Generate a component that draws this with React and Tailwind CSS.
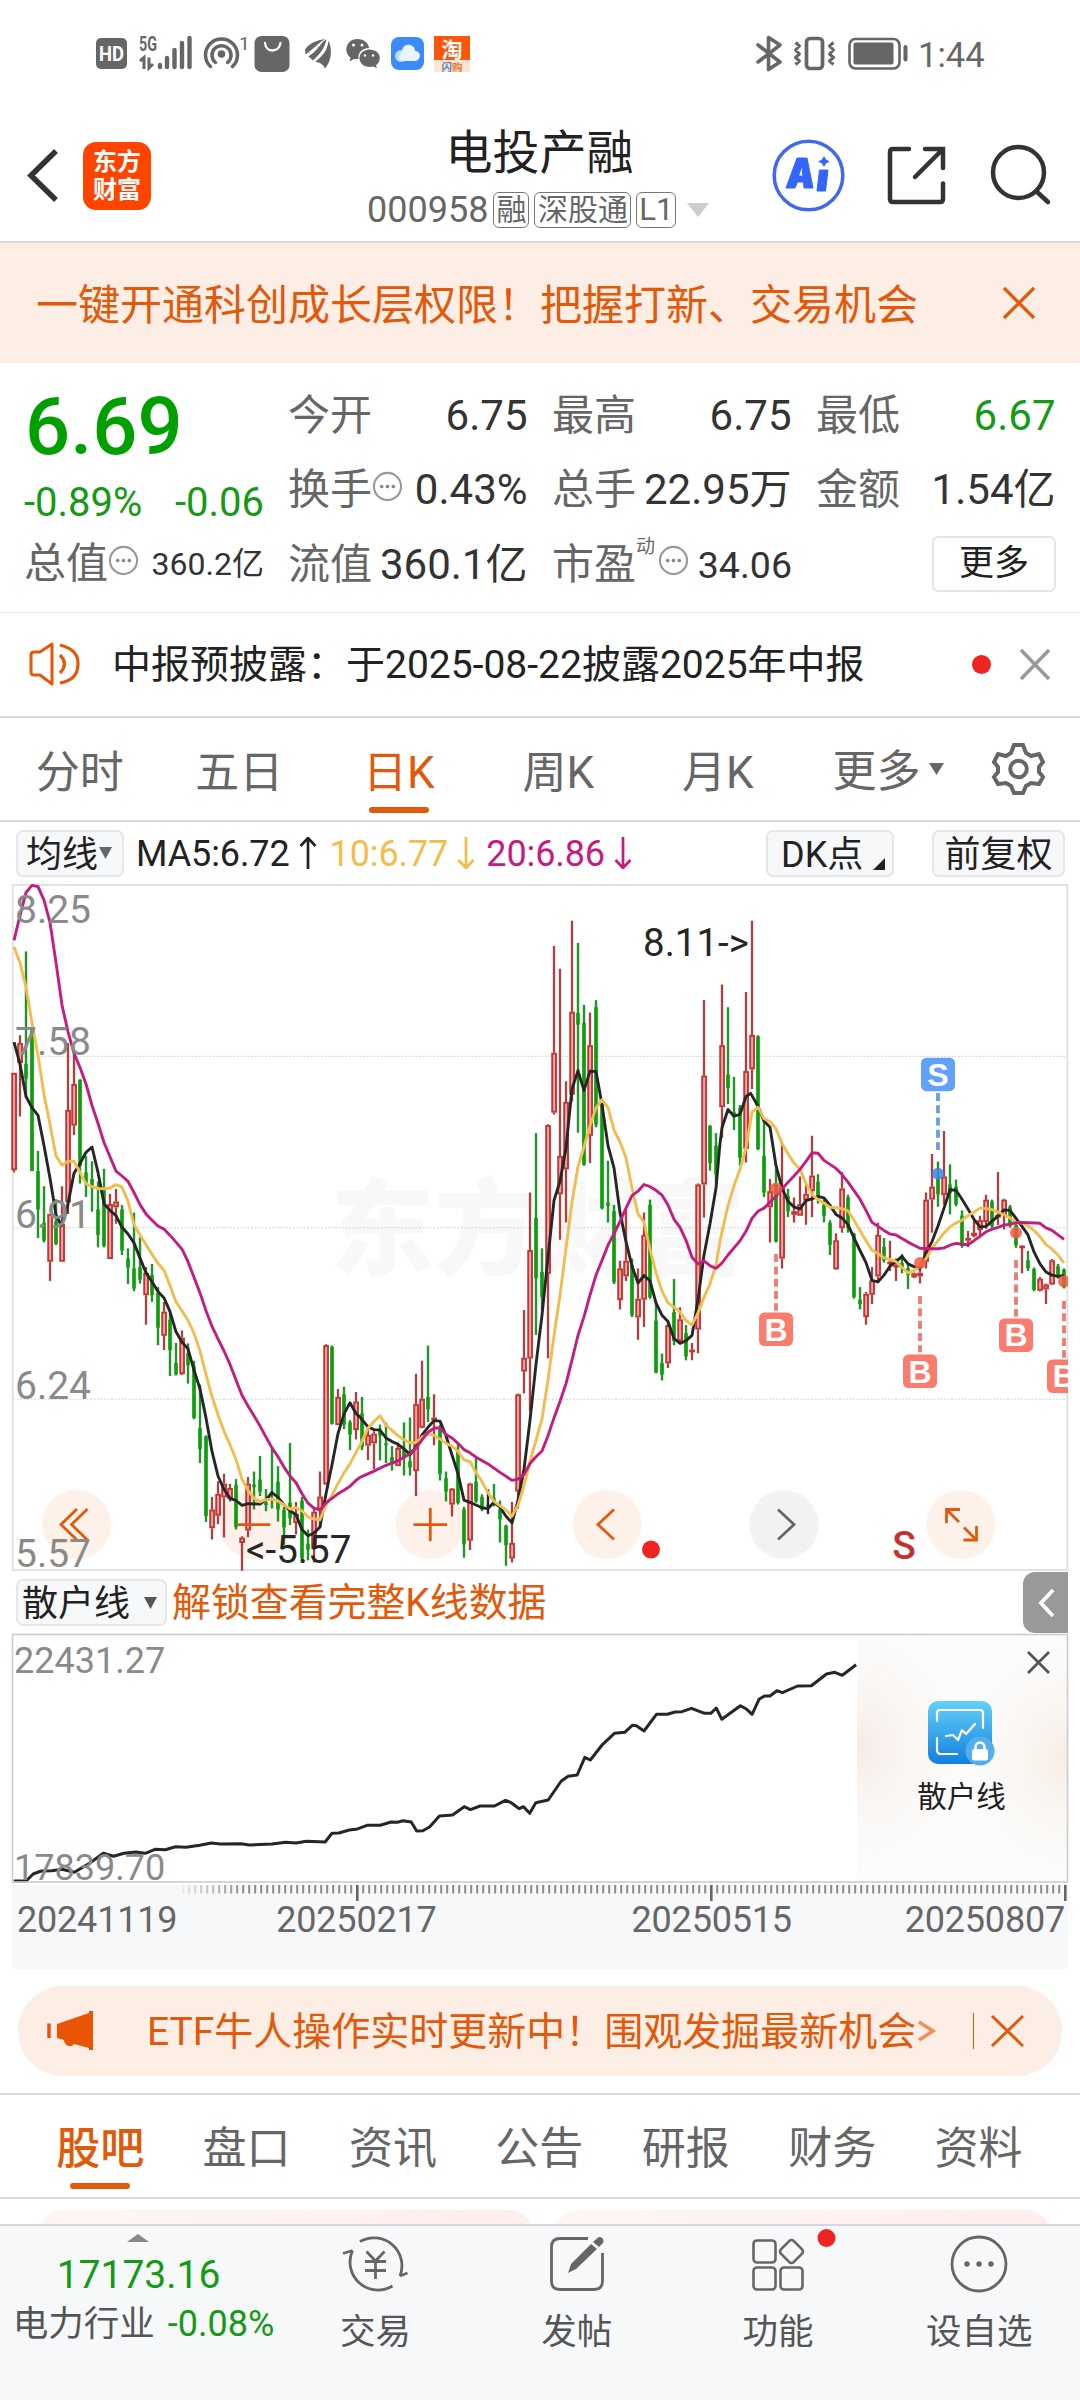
import React from "react";

/* Candles: high, body top, body bottom, low, direction (r up, g down, k flat). One slot every 6px. */
const CANDLES = `432,432,650,655,r;348,365,410,530,r;160,412,445,488,g;330,335,652,652,g;607,652,738,802,g;686,768,808,812,g;748,748,855,898,r;715,765,815,818,g;686,770,855,855,r;365,515,722,748,r;385,457,550,571,r;447,447,640,680,g;618,655,682,710,g;630,670,690,743,g;675,738,795,823,g;647,690,820,823,g;703,726,849,849,r;692,720,733,770,r;728,738,830,840,g;825,848,868,905,g;745,870,915,921,g;800,868,895,904,g;867,880,930,996,r;860,885,930,945,g;912,925,1003,1042,g;945,967,1021,1053,r;970,985,1053,1111,g;1037,1082,1108,1110,g;1009,1025,1107,1109,r;1038,1060,1087,1128,g;1077,1090,1205,1208,g;1130,1228,1275,1306,g;1244,1246,1425,1438,g;1382,1410,1452,1477,r;1347,1375,1424,1443,r;1330,1352,1383,1473,r;1353,1362,1387,1392,r;1342,1355,1450,1455,g;1470,1473,1485,1547,r;1337,1352,1457,1472,r;1325,1354,1360,1410,g;1290,1343,1370,1380,g;1364,1395,1400,1414,g;1273,1373,1378,1408,g;1313,1348,1410,1437,g;1405,1411,1450,1490,g;1261,1395,1430,1445,g;1393,1420,1440,1466,r;1382,1390,1520,1524,g;1455,1487,1500,1524,g;1408,1415,1498,1529,r;1325,1381,1410,1450,r;1040,1042,1354,1355,r;1043,1045,1218,1220,g;1140,1158,1221,1221,r;1135,1152,1220,1230,g;1210,1215,1242,1277,g;1147,1168,1232,1253,r;1158,1195,1270,1277,g;1225,1243,1267,1299,r;1235,1240,1262,1320,r;1220,1235,1245,1300,g;1215,1262,1266,1306,g;1268,1293,1308,1323,g;1260,1272,1313,1313,r;1215,1276,1295,1334,g;1204,1302,1316,1334,g;1106,1174,1324,1380,r;1077,1162,1227,1228,r;1043,1158,1185,1214,g;1152,1204,1210,1266,r;1220,1230,1330,1345,g;1325,1340,1370,1392,g;1362,1363,1399,1426,r;1262,1280,1395,1399,g;1404,1410,1488,1518,g;1350,1352,1480,1501,r;1294,1348,1392,1395,g;1376,1382,1410,1414,g;1365,1400,1402,1420,k;1353,1385,1390,1403,g;1390,1410,1432,1484,g;1444,1446,1490,1536,g;1393,1485,1520,1529,r;1150,1152,1370,1408,r;963,1070,1101,1150,r;700,829,1072,1190,r;567,757,892,1019,g;825,878,934,965,g;547,549,882,1071,r;148,387,521,525,r;199,618,704,806,r;451,497,648,767,r;91,295,481,496,r;141,298,324,566,g;280,320,638,640,g;297,370,573,634,r;269,285,548,554,g;490,495,735,738,g;629,723,730,767,g;728,742,901,905,g;853,870,941,962,r;737,853,888,898,r;848,862,975,979,g;870,938,980,1030,r;745,795,940,1001,r;716,728,935,938,g;945,987,1103,1105,g;1061,1082,1108,1121,g;988,997,1083,1093,r;894,968,1033,1042,g;957,984,1033,1037,r;997,1015,1067,1076,g;1037,1052,1056,1076,r;680,682,1007,1060,r;269,438,682,756,r;549,551,634,651,g;567,595,660,680,g;234,370,509,578,r;285,436,466,502,g;441,520,530,560,g;504,510,622,640,g;251,428,602,633,r;91,347,424,468,r;348,350,603,605,g;540,618,700,710,g;670,697,733,812,r;647,682,810,812,g;588,690,848,870,r;692,708,742,755,g;711,742,750,767,r;664,726,752,752,r;682,703,718,772,r;573,662,697,755,r;659,676,710,725,g;713,727,752,767,g;762,768,817,840,g;791,807,872,873,r;654,691,780,790,r;705,711,780,790,g;790,793,934,938,g;912,940,950,962,g;923,927,979,996,r;867,897,929,950,r;768,795,888,903,r;802,822,852,857,g;808,855,860,876,r;848,862,866,898,r;838,858,868,881,g;857,870,885,916,g;879,881,890,892,r;862,880,888,904,r;700,716,855,870,r;614,687,716,790,r;631,666,704,732,g;562,664,706,727,r;637,682,702,749,g;671,687,727,731,g;740,752,820,824,g;786,802,808,822,r;762,790,798,801,r;752,762,784,800,r;705,716,766,781,r;716,720,776,779,g;654,750,755,773,r;714,716,751,783,r;728,732,775,779,g;770,773,818,824,g;818,819,824,881,r;831,852,870,876,g;868,872,918,921,g;889,893,920,922,r;904,906,917,950,r;849,852,906,908,r;860,865,890,893,g;870,873,912,915,g`
  .split(";")
  .map((s) => s.split(","));

/* Moving averages, three consecutive panels of 360px each. */
const MA5 = [
  "42,363 60,412 78,485 96,510 114,527 132,595 150,668 168,750 184,774 200,740 222,657 240,635 258,610 276,598 294,655 312,725 330,740 348,752 366,778 384,793 402,813 420,847 438,880 456,900 474,922 492,936 510,967 528,1012 546,1035 564,1050 582,1098 600,1140 618,1205 636,1280 654,1335 672,1365 690,1385 708,1390 726,1401 744,1397 780,1398 800,1387 816,1372 834,1383 852,1400 870,1413 888,1422 906,1455 924,1469 942,1463 960,1449 978,1375 996,1310 1014,1240 1032,1196 1050,1171 1068,1195",
  "0,1203 24,1225 42,1231 60,1232 78,1250 96,1258 114,1264 132,1274 150,1287 168,1270 186,1243 204,1226 222,1211 240,1212 258,1245 276,1288 294,1330 312,1389 330,1394 348,1400 366,1406 384,1408 402,1394 420,1405 438,1425 456,1440 474,1390 492,1320 510,1210 528,1085 546,975 564,845 582,718 600,675 618,600 636,468 654,427 672,472 690,428 708,429 726,503 744,595 762,645 780,745 798,810 816,865 834,903 852,886 870,898 888,947 906,975 924,989 942,1027 960,1038 978,1032 996,1020 1014,940 1032,840 1050,770 1068,690 1080,590",
  "6,555 24,514 42,529 60,525 78,485 92,478 114,507 132,540 150,554 168,640 186,690 204,720 222,732 240,737 258,718 276,714 294,709 312,712 330,729 348,749 366,757 384,772 402,802 420,830 438,857 456,897 474,900 492,885 510,865 528,855 546,843 564,860 582,866 600,870 618,835 636,810 654,775 672,735 690,694 708,695 726,715 744,737 762,760 780,777 798,776 816,764 834,753 852,739 870,740 888,758 906,776 924,795 942,833 960,860 978,878 996,885 1014,888 1032,886",
];
const MA10 = [
  "42,150 60,185 78,240 96,320 114,393 132,480 150,548 168,618 186,639 204,630 222,630 240,655 258,680 276,687 294,691 312,692 330,690 348,682 366,688 384,720 402,772 420,795 438,817 456,838 474,859 492,874 510,908 528,945 546,965 564,987 582,1015 600,1055 618,1108 636,1157 654,1198 672,1235 690,1265 708,1298 726,1342 744,1367 762,1385 780,1393 798,1388 816,1387 834,1391 852,1400 870,1409 888,1406 906,1413 924,1427 942,1431 960,1433 978,1400 996,1378 1014,1352 1032,1328 1050,1308 1068,1282",
  "0,1267 24,1228 42,1213 60,1200 78,1221 96,1233 114,1245 132,1254 150,1260 168,1260 186,1248 204,1241 222,1244 240,1252 258,1262 276,1268 294,1280 312,1299 330,1303 348,1327 366,1348 384,1373 402,1392 420,1402 438,1411 456,1425 474,1400 492,1357 510,1302 528,1255 546,1207 564,1120 582,1020 600,930 618,825 636,722 654,642 672,598 690,550 708,511 726,492 744,510 762,560 780,587 798,622 816,690 834,748 852,767 870,827 888,880 906,921 924,947 942,957 960,968 978,987 996,997 1014,970 1032,935 1050,905 1068,862",
  "0,810 6,788 24,730 42,685 60,648 78,600 96,520 114,509 132,535 150,541 168,557 186,590 204,613 222,634 240,648 258,680 276,705 294,716 312,724 330,733 348,734 366,736 384,741 402,762 420,785 438,808 456,829 474,837 492,846 510,850 528,855 546,868 564,880 582,875 600,864 618,848 636,825 654,808 672,791 690,777 708,768 726,762 744,752 762,744 780,735 798,736 816,738 834,744 852,750 870,757 888,768 906,768 924,775 942,785 960,799 978,817 996,827 1014,840 1032,858",
];
const MA20 = [
  "42,135 60,80 78,28 96,12 114,15 132,45 150,95 168,185 186,280 204,340 222,388 240,420 258,457 276,505 294,545 312,588 330,620 348,652 366,663 384,675 402,700 420,727 438,748 456,762 474,775 492,782 510,796 528,811 546,827 564,855 582,890 600,925 618,965 636,1000 654,1028 672,1055 690,1085 708,1120 726,1154 744,1178 762,1200 780,1223 798,1248 816,1272 834,1292 852,1315 870,1335 888,1350 906,1375 924,1396 942,1407 960,1411 978,1395 996,1385 1014,1375 1032,1367 1050,1358 1068,1345",
  "0,1338 42,1324 78,1311 114,1301 150,1285 168,1272 186,1254 204,1237 222,1228 240,1227 258,1242 276,1250 294,1262 312,1276 330,1283 348,1293 384,1308 420,1327 456,1345 474,1342 492,1332 510,1307 528,1292 546,1279 564,1245 582,1205 600,1168 618,1128 636,1075 654,1020 672,978 690,930 708,885 726,852 744,818 762,792 780,765 798,735 816,707 834,697 852,682 870,687 888,695 906,706 924,728 942,760 960,778 978,807 996,845 1014,860 1032,853 1050,864 1068,870 1080,862",
  "6,858 24,840 42,824 60,808 78,787 96,758 114,742 132,735 150,722 168,708 186,692 204,677 222,663 240,648 258,630 276,611 294,612 312,628 330,637 348,646 366,660 384,677 402,696 420,715 438,740 456,767 474,776 492,785 510,793 528,795 546,803 564,811 582,818 600,825 636,826 654,826 672,824 690,818 708,814 726,816 744,817 762,808 780,798 798,788 816,782 834,778 852,773 870,771 888,768 906,767 960,769 978,779 996,785 1014,795 1032,805",
];
const RETAIL =
  "20,963 38,963 48,942 60,933 75,932 90,928 108,937 120,922 130,910 150,880 165,889 180,880 197,876 211,880 225,868 240,869 255,860 270,862 290,856 307,849 320,852 350,851 362,855 395,852 415,847 430,849 445,844 472,846 482,820 492,819 507,810 517,808 533,796 552,796 568,786 577,787 585,782 597,786 605,813 614,812 624,800 638,768 657,765 674,740 683,749 697,738 718,738 734,721 742,728 754,746 760,740 769,760 778,728 796,720 815,663 825,649 838,645 849,592 857,600 875,553 892,520 907,517 918,496 924,497 935,513 953,463 969,463 980,456 990,455 1004,445 1023,460 1032,460 1040,444 1048,478 1058,463 1075,437 1083,446 1092,463 1102,418 1110,408 1118,408 1128,392 1136,398 1158,378 1178,377 1200,342 1212,337 1223,346 1243,314";

const py = (v) => 880 + v / 2.24;
const linePoints = (parts) =>
  parts
    .flatMap((p, k) =>
      p.split(" ").map((s) => {
        const [x, y] = s.split(",").map(Number);
        return `${(k * 360 + x / 3).toFixed(1)},${py(y).toFixed(1)}`;
      })
    )
    .join(" ");
const retailPoints = RETAIL.split(" ")
  .map((s) => {
    const [x, y] = s.split(",").map(Number);
    return `${(x / 1.4519).toFixed(1)},${(1560 + y / 3).toFixed(1)}`;
  })
  .join(" ");

/* Icon whose drawing uses page units: box = "x y w h" */
function Icon({ box, className = "", children }) {
  const [, , w, h] = box.split(" ");
  return (
    <svg viewBox={box} width={w} height={h} className={"shrink-0 overflow-visible " + className} fill="none">
      {children}
    </svg>
  );
}

function StatusBar() {
  return (
    <div className="flex h-[107px] items-center pl-[96px] text-[#666]">
      <Icon box="96 37 32 36">
        <rect x="96" y="39" width="31" height="31" rx="5" fill="#666" />
        <text x="111.500" y="62" textAnchor="middle" fontSize="20" fontWeight="700" fill="#fff" textLength="25" lengthAdjust="spacingAndGlyphs">HD</text>
      </Icon>
      <Icon box="138 37 56 36" className="ml-[10px]">
        <text x="139" y="51.500" fontSize="20" fontWeight="700" fill="#666" textLength="18" lengthAdjust="spacingAndGlyphs">5G</text>
        <path d="M140 62L144 58.500V70M149 58.500V69L153 65" stroke="#666" strokeWidth="3" />
        <path d="M160 66V68M167 59V68M174.500 51V68M182 44V68M189.500 39V68" stroke="#666" strokeWidth="4.400" strokeLinecap="round" />
      </Icon>
      <Icon box="203 37 46 36" className="ml-[9px]">
        <circle cx="221.500" cy="55" r="3.800" fill="#666" />
        <path d="M210.500 67.500A16 16 0 1 1 232.500 67.500M215.500 63.500A9.500 9.500 0 1 1 227.500 63.500" stroke="#666" strokeWidth="3.500" strokeLinecap="round" />
        <text x="239" y="51" fontSize="19" fill="#666">1</text>
      </Icon>
      <Icon box="254 35 36 38" className="ml-[5px]">
        <rect x="254.500" y="36" width="35" height="36" rx="7" fill="#666" />
        <path d="M265 43C266 53 279 53 280.500 43" stroke="#fff" strokeWidth="2.300" strokeLinecap="round" />
      </Icon>
      <Icon box="304 37 28 36" className="ml-[14px]">
        <path d="M305 50.500C310 43.500 318 41 325.500 40C319 43 315 49 305.500 55.500Z" fill="#666" />
        <path d="M308.500 57.500C315 53 320 47 323 42.500L326.500 40.500C325 49 319 56 313 61.500Z" fill="#666" />
        <path d="M315 63C323 57 328 50 328.500 41.500C333 51 331 63 325 69.500C323 65 319 63 315 63Z" fill="#666" />
      </Icon>
      <Icon box="345 37 36 36" className="ml-[13px]">
        <path d="M357.500 40C364 40 368.500 44 369 49C362 49 357.500 54 358.500 60L354 60L349.500 62.500L350.500 58.500C343 53 346 40 357.500 40Z" fill="#666" />
        <path d="M369 50.500C382 51 382 62 376 66.500L377 69L373 67.500C358 71 354 52 369 50.500Z" fill="#666" />
        <g fill="#fff"><circle cx="353.500" cy="46" r="1.500" /><circle cx="362" cy="46" r="1.500" /><circle cx="365" cy="56.500" r="1.200" /><circle cx="373" cy="56.500" r="1.200" /></g>
      </Icon>
      <Icon box="391 37 34 36" className="ml-[10px]">
        <rect x="391" y="38" width="33" height="33" rx="8" fill="#3d8bfa" />
        <circle cx="401" cy="57" r="6" fill="#b5dcff" />
        <path d="M399 60C399 55 401 54 402 53C402 43 415 44 415 52C422 52 421 62 415 62H402Z" fill="#e9f5ff" />
      </Icon>
      <Icon box="434 36 36 36" className="ml-[9px]">
        <rect x="434" y="36" width="36" height="25" fill="#fb560a" />
        <rect x="434" y="60" width="36" height="12" fill="#fde5d3" />
        <text x="452" y="56.500" textAnchor="middle" fontSize="21" fontWeight="700" fill="#fff">淘</text>
        <text x="452" y="70.500" textAnchor="middle" fontSize="10.500" fontWeight="700" fill="#e8792e"><tspan fill="#5586b5">闪</tspan>购</text>
      </Icon>
      <Icon box="756 36 26 37" className="ml-[286px]">
        <path d="M758 46L780 63L768.500 70.500V38.500L780 46L758 63" stroke="#666" strokeWidth="3.600" strokeLinecap="round" strokeLinejoin="round" />
      </Icon>
      <Icon box="793 37 44 36" className="ml-[11px]">
        <rect x="806.500" y="39.500" width="16" height="30" rx="3.500" stroke="#666" strokeWidth="3.700" />
        <path d="M795.500 43.500L799.500 47L795.500 51L799.500 55L795.500 58.500L799.500 62L795.500 65.500M833.500 43.500L829.500 47L833.500 51L829.500 55L833.500 58.500L829.500 62L833.500 65.500" stroke="#666" strokeWidth="3" strokeLinejoin="round" />
      </Icon>
      <Icon box="847 37 62 36" className="ml-[10px]">
        <rect x="849.500" y="40" width="50" height="29.500" rx="6" stroke="#666" strokeWidth="2.600" />
        <rect x="853.500" y="43.500" width="40" height="22" rx="2" fill="#666" />
        <path d="M905.500 48V60.500" stroke="#666" strokeWidth="4" strokeLinecap="round" />
      </Icon>
      <span className="ml-[9px] mt-[3px] text-[34.500px] leading-[40px]">1:44</span>
    </div>
  );
}

function Header() {
  return (
    <header className="flex h-[136px] border-b-2 border-[#d9d9d9] pl-[26px]">
      <Icon box="26 145 34 60" className="mt-[38px]">
        <path d="M56 151L31 175.500L56 200" stroke="#333" strokeWidth="5.500" />
      </Icon>
      <div className="ml-[23px] mt-[35px] flex h-[68px] w-[68px] flex-col items-center justify-center rounded-[13px] bg-[#ff4400] text-[24px] font-bold leading-[28px] text-white">
        <span>东方</span>
        <span>财富</span>
      </div>
      <div className="ml-[180px] w-[420px] text-center">
        <div className="h-[64px] pr-[3px] pt-[14px] text-[47px] leading-[64px] text-[#222]">电投产融</div>
        <div className="mt-[20px] flex h-[38px] items-center pl-[36px] text-[36px] leading-[38px] text-[#666]">
          <span>000958</span>
          <span className="ml-[5px] flex h-[36px] w-[36px] items-center justify-center rounded-[6px] border border-[#777] text-[30px]">融</span>
          <span className="ml-[5px] flex h-[36px] w-[97px] items-center justify-center rounded-[6px] border border-[#777] text-[30px]">深股通</span>
          <span className="ml-[5px] flex h-[36px] w-[40px] items-center justify-center rounded-[6px] border border-[#777] text-[31px]">L1</span>
          <Icon box="687 202 22 14" className="ml-[11px]"><path d="M687 202H709L698 216Z" fill="#ccc" /></Icon>
        </div>
      </div>
      <Icon box="772 139 74 74" className="ml-[21px] mt-[32px]">
        <circle cx="808.500" cy="175.500" r="34.300" stroke="#4169ef" strokeWidth="3.500" />
        <path fillRule="evenodd" d="M797 158H807L813 188H804L803.500 182H797.500L795 188H786ZM802 166L798.500 176H803ZM819.500 170H828L825.500 191H817Z" fill="#3565ff" stroke="#3565ff" strokeLinejoin="round" />
        <path d="M824 156L826 159.500L829.500 161.500L826 163.500L824 167L822 163.500L818 161.500L822 159.500Z" fill="#3565ff" />
      </Icon>
      <Icon box="886 145 62 62" className="ml-[40px] mt-[38px]">
        <path d="M909 149H893Q890 149 890 152V199Q890 202 893 202H940Q943 202 943 199V183.500M925 149H943V168M942 150L915 177" stroke="#333" strokeWidth="4.500" strokeLinecap="round" />
      </Icon>
      <Icon box="990 143 62 62" className="ml-[42px] mt-[36px]">
        <circle cx="1018.500" cy="172.500" r="25.500" stroke="#333" strokeWidth="4.500" />
        <path d="M1036 191L1048 202" stroke="#333" strokeWidth="4.500" strokeLinecap="round" />
      </Icon>
    </header>
  );
}

function Dots() {
  return (
    <svg viewBox="0 0 32 32" width="31" height="31" fill="none" className="mb-[8px] shrink-0">
      <circle cx="16" cy="16" r="14" stroke="#999" strokeWidth="2.200" />
      <g fill="#888"><circle cx="10" cy="16" r="1.900" /><circle cx="16" cy="16" r="1.900" /><circle cx="22" cy="16" r="1.900" /></g>
    </svg>
  );
}

function Stat({ label, value, dots, className = "text-[#333]" }) {
  return (
    <div className="flex w-[239.500px] items-center">
      <span className="text-[#666]">{label}</span>
      {dots && <Dots />}
      <span className={"ml-auto " + className}>{value}</span>
    </div>
  );
}

function Quote() {
  return (
    <section className="flex h-[250px] border-b border-[#e6e6e6] pl-[24px]">
      <div className="w-[240px]">
        <div className="mt-[20px] h-[88px] pl-[1px] text-[79.500px] font-medium leading-[88px] text-[#00a000]">6.69</div>
        <div className="mt-[12px] flex h-[40px] justify-between whitespace-nowrap text-[40px] leading-[40px] text-[#159a15]">
          <span>-0.89%</span>
          <span>-0.06</span>
        </div>
        <div className="mt-[16px] flex h-[50px] items-center text-[42px] leading-[50px] text-[#666]">
          总值<Dots />
          <span className="ml-auto text-[32px] text-[#333]">360.2亿</span>
        </div>
      </div>
      <div className="ml-[24px] grid auto-rows-[50px] grid-cols-[240px_240px_240px] gap-x-[24px] gap-y-[24.500px] whitespace-nowrap pt-[27.500px] text-[42px] leading-[50px]">
        <Stat label="今开" value="6.75" />
        <Stat label="最高" value="6.75" />
        <Stat label="最低" value="6.67" className="text-[#159a15]" />
        <Stat label="换手" value="0.43%" dots />
        <Stat label="总手" value="22.95万" />
        <Stat label="金额" value="1.54亿" />
        <Stat label="流值" value="360.1亿" />
        <div className="flex items-center text-[#666]">
          市盈<span className="mb-[36px] text-[19px] leading-[20px]">动</span>
          <span className="w-[3px]" />
          <Dots />
          <span className="ml-auto text-[37.500px] text-[#333]">34.06</span>
        </div>
        <div className="ml-auto mt-[-4px] flex h-[56px] w-[124px] items-center justify-center rounded-[6px] border-2 border-[#e5e5e5] text-[35px] text-[#222]">更多</div>
      </div>
    </section>
  );
}

function Notice() {
  return (
    <section className="flex h-[105px] items-center border-b-2 border-[#d9d9d9] pl-[28px]">
      <Icon box="28 640 54 50">
        <path d="M31 655Q31 652 34 652H40L52 644V684L40 675H34Q31 675 31 672Z" stroke="#e2590a" strokeWidth="3" strokeLinejoin="round" />
        <path d="M60 655Q69 664 60 673M60 645Q79 650 78 664Q78 680 60 683" stroke="#e2590a" strokeWidth="3.200" />
      </Icon>
      <span className="ml-[30px] text-[39px] leading-[50px] text-[#222]">中报预披露：于2025-08-22披露2025年中报</span>
      <span className="ml-auto h-[19px] w-[19px] rounded-full bg-[#f02323]" />
      <Icon box="1018 648 34 34" className="ml-[27px] mr-[28px]">
        <path d="M1021 650L1049 679M1049 650L1021 679" stroke="#999" strokeWidth="3.500" />
      </Icon>
    </section>
  );
}

function PeriodTabs() {
  const tabs = ["分时", "五日", "日K", "周K", "月K"];
  return (
    <nav className="flex h-[104px] items-center border-b-2 border-[#d9d9d9] text-[44px] leading-[60px] text-[#666]">
      {tabs.map((t, i) => (
        <div key={t} className="flex h-full w-[159.500px] flex-col items-center pt-[25px]">
          <span className={i === 2 ? "text-[#e2590a]" : ""}>{t}</span>
          {i === 2 && <span className="mt-[4px] h-[6px] w-[60px] rounded-full bg-[#e2590a]" />}
        </div>
      ))}
      <span className="ml-[35px] mt-[6px]">更多</span>
      <Icon box="929 763 15 12" className="ml-[8px]"><path d="M929 763H944L936.500 775Z" fill="#666" /></Icon>
      <Icon box="990 742 56 56" className="ml-[46px]">
        <path d="M1014 746H1023L1026 754L1031 757L1039 755L1043 763L1039 768V773L1043 778L1039 785L1031 784L1026 787L1023 794H1014L1011 787L1006 784L998 785L994 778L998 773V768L994 763L998 755L1006 757L1011 754Z" stroke="#666" strokeWidth="4" />
        <circle cx="1018.500" cy="770" r="8.300" stroke="#666" strokeWidth="4" />
      </Icon>
    </nav>
  );
}

function Arrow({ up, color }) {
  return (
    <svg viewBox="0 0 18 32" width="18" height="32" fill="none" className="ml-[9px] shrink-0">
      <path d={up ? "M9 32V1M1.500 9L9 1L16.500 9" : "M9 0V31M1.500 23L9 31L16.500 23"} stroke={color} strokeWidth="2.700" />
    </svg>
  );
}

function MaBar() {
  return (
    <div className="flex h-[62px] items-center pl-[16px] text-[36px] leading-[44px] text-[#222]">
      <div className="flex h-[47px] w-[108px] items-center rounded-[7px] border-2 border-[#e4e6e9] bg-[#f7f8fa] pl-[8px]">
        <span className="mt-[3px]">均线</span><Icon box="0 0 13 12" className="ml-[1px]"><path d="M0 0H13L6.500 12Z" fill="#666" /></Icon>
      </div>
      <span className="ml-[12px] mt-[1px] tracking-[-0.1px]">MA5:6.72</span><Arrow up color="#222" />
      <span className="ml-[13px] mt-[1px] text-[#f4bd4b] tracking-[-0.1px]">10:6.77</span><Arrow color="#f4bd4b" />
      <span className="ml-[11px] mt-[1px] text-[#c71a80] tracking-[-0.1px]">20:6.86</span><Arrow color="#c71a80" />
      <div className="ml-auto flex h-[47px] w-[128px] items-center rounded-[7px] border-2 border-[#e4e6e9] bg-[#f7f8fa] pl-[13px]">
        <span className="mt-[3px]">DK点</span><Icon box="0 0 12 12" className="ml-[10px] mt-[22px]"><path d="M12 0V12H0Z" fill="#222" /></Icon>
      </div>
      <div className="ml-[38px] mr-[15px] flex h-[47px] w-[133px] items-center justify-center rounded-[7px] border-2 border-[#e4e6e9] bg-[#f7f8fa]"><span className="mt-[3px]">前复权</span></div>
    </div>
  );
}

function Signal({ x, top, letter, y1, y2, dot }) {
  const sell = letter === "S";
  const c = sell ? "#62a1fb" : "#fb7c6d";
  return (
    <g>
      <path d={`M${x} ${py(y1)}V${py(y2)}`} stroke={sell ? "#62a1e3" : "#ea7c70"} strokeWidth="3.800" strokeDasharray="8 4.300" />
      <ellipse cx={x} cy={py(dot)} rx="6" ry="6" fill={sell ? "#3a86ea" : "#f15a40"} fillOpacity=".85" />
      <rect x={x - 17} y={py(top)} width="34" height="33.500" rx="5.500" fill={c} />
      <text x={x} y={py(top) + 28} textAnchor="middle" fontSize="32" fontWeight="700" fill="#fff" fontFamily="'Liberation Sans'">{letter}</text>
    </g>
  );
}

function KChart() {
  const circles = [76.5, 253.5, 430, 607, 784, 961];
  const labels = [["8.25", 909.5], ["7.58", 1041.6], ["6.91", 1214], ["6.24", 1385], ["5.57", 1553]];
  return (
    <svg viewBox="0 884 1080 688" width="1080" height="688" className="block overflow-visible" fill="none">
      <defs><clipPath id="plot"><rect x="12" y="884" width="1056" height="688" /></clipPath></defs>
      <text x="330" y="1267" fontSize="104" fontWeight="900" fill="#f8f8f8" fontFamily="'Noto Sans CJK SC'">东方财富</text>
      {[1056.3, 1227.8, 1399.2].map((y) => (
        <path key={y} d={`M13 ${y}H1067`} stroke="#d2d2d2" strokeDasharray="2 1.500" />
      ))}
      <rect x="12.800" y="885" width="1054.500" height="685" stroke="#e2e2e2" strokeWidth="2" />
      {circles.map((x, i) => (
        <circle key={x} cx={x} cy="1524.600" r="34.500" fill={i === 4 ? "#f2f2f2" : "#fef1e9"} />
      ))}
      {CANDLES.map(([h, t, b, l, d], i) => {
        const x = 14 + 6 * i;
        const [H, T, B, L] = [h, t, b, l].map((v) => py(Number(v)));
        if (d === "r")
          return (
            <g key={i}>
              <path d={`M${x} ${H}V${T}M${x} ${B}V${L}`} stroke="#b04040" strokeWidth="2.300" />
              <rect x={x - 1.8} y={T + 0.9} width="3.800" height={Math.max(B - T - 1.8, 0.8)} fill="#eda9a9" stroke="#c43532" strokeWidth="1.900" />
            </g>
          );
        return (
          <g key={i}>
            <path d={`M${x} ${H}V${L}`} stroke={d === "k" ? "#222" : "#1f9626"} strokeWidth="2.400" />
            <rect x={x - 1.8} y={T} width="3.600" height={B - T} fill={d === "k" ? "#222" : "#0c9f0c"} />
          </g>
        );
      })}
      <g strokeWidth="2.900" strokeLinejoin="round">
        <polyline points={linePoints(MA5)} stroke="#262626" />
        <polyline points={linePoints(MA10)} stroke="#f1bd4e" />
        <polyline points={linePoints(MA20)} stroke="#c51c7f" />
      </g>
      <g clipPath="url(#plot)">
        <Signal x={938} top={398} letter="S" y1={477} y2={605} dot={658} />
        <Signal x={776} top={969} letter="B" y1={838} y2={965} dot={691} />
        <Signal x={920} top={1063} letter="B" y1={932} y2={1058} dot={858} />
        <Signal x={1016} top={982} letter="B" y1={851} y2={978} dot={790} />
        <Signal x={1064} top={1074} letter="B" y1={943} y2={1070} dot={899} />
      </g>
      <g stroke="#e2590a" strokeWidth="2.800">
        <path d="M77 1509L61 1524.600L77 1540M87.500 1509L71.500 1524.600L87.500 1540" />
        <path d="M237 1524.600H270" />
        <path d="M413.500 1524.600H447M430.300 1508V1541" />
        <path d="M614 1509.500L598 1524.600L614 1539.500" />
        <path d="M778 1509.500L794 1524.600L778 1539.500" stroke="#666" />
        <path d="M946.500 1523V1509.500H960M946.500 1509.500L959 1522M963.500 1540H976.500V1526M976.500 1540L964 1527.500" />
      </g>
      <g fontSize="39" fill="#8a8a8a">
        {labels.map(([t, y]) => <text key={t} x="15" y={y + 13.5}>{t}</text>)}
      </g>
      <text x="643" y="956" fontSize="38.500" fill="#262626">8.11-&gt;</text>
      <text x="246" y="1562.500" fontSize="38.500" fill="#262626">&lt;-5.57</text>
      <circle cx="651" cy="1549.600" r="9" fill="#f02323" />
      <text x="904" y="1558.500" textAnchor="middle" fontSize="39" fontWeight="500" fill="#c8302f">S</text>
    </svg>
  );
}

function SubBar() {
  return (
    <div className="flex h-[61px] items-center pl-[16px] text-[36px] leading-[44px] text-[#222]">
      <div className="flex h-[47px] w-[151px] items-center rounded-[7px] border-2 border-[#e4e6e9] bg-[#f7f8fa] pl-[4px]">
        <span className="mt-[2px]">散户线</span><Icon box="0 0 13 12" className="ml-[14px]"><path d="M0 0H13L6.500 12Z" fill="#555" /></Icon>
      </div>
      <span className="ml-[5px] mt-[1px] text-[38.900px] text-[#e2590a]">解锁查看完整K线数据</span>
      <div className="ml-auto mr-[12px] flex h-[61px] w-[45px] items-center justify-center rounded-l-[12px] bg-[#999]">
        <Icon box="0 0 18 28"><path d="M16 1L4 14L16 27" stroke="#fff" strokeWidth="3.800" /></Icon>
      </div>
    </div>
  );
}

function RetailChart() {
  return (
    <svg viewBox="0 1633 1080 252" width="1080" height="252" className="block" fill="none">
      <defs>
        <radialGradient id="warmR" cx="1" cy=".5" r=".6"><stop offset="0" stopColor="#f7ede5" /><stop offset="1" stopColor="#fcfcfb" stopOpacity="0" /></radialGradient>
        <radialGradient id="warmL" cx="0" cy=".45" r=".6"><stop offset="0" stopColor="#f6ebe5" /><stop offset="1" stopColor="#fcfcfb" stopOpacity="0" /></radialGradient>
        <linearGradient id="blue" x1="0" y1="0" x2="0" y2="1"><stop offset="0" stopColor="#63d0f7" /><stop offset="1" stopColor="#127fdf" /></linearGradient>
      </defs>
      <polyline points={retailPoints} stroke="#262626" strokeWidth="3" strokeLinejoin="round" />
      <rect x="857" y="1635" width="210" height="246" fill="#fcfcfb" />
      <rect x="857" y="1635" width="210" height="246" fill="url(#warmR)" />
      <rect x="857" y="1635" width="210" height="246" fill="url(#warmL)" />
      <rect x="12.500" y="1634.500" width="1055" height="247.500" stroke="#ccc" strokeWidth="1.600" />
      <path d="M1028 1652L1049 1673M1049 1652L1028 1673" stroke="#555" strokeWidth="2.800" />
      <rect x="928" y="1701" width="64" height="63" rx="10" fill="url(#blue)" />
      <path d="M937 1721V1713Q937 1710 940 1710H980Q983 1710 983 1713V1728M937 1738V1750Q937 1754 941 1754H957M946 1736L953 1735L958 1740L962 1730L966 1734L975 1724" stroke="#fff" strokeWidth="2.200" strokeLinecap="round" strokeLinejoin="round" />
      <circle cx="980" cy="1751" r="14.500" fill="#51aeef" />
      <rect x="972" y="1749" width="16" height="11.500" rx="2" fill="#fff" />
      <path d="M975.500 1750V1747A4.500 4.500 0 0 1 984.500 1747V1750" stroke="#fff" strokeWidth="2.500" />
      <text x="961.500" y="1807" textAnchor="middle" fontSize="29.500" fill="#222">散户线</text>
      <g fontSize="36" fill="#8a8a8a"><text x="14" y="1673">22431.27</text><text x="14" y="1880">17839.70</text></g>
    </svg>
  );
}

function DateAxis() {
  return (
    <div className="ml-[12px] h-[84px] w-[1056px] bg-[#f7f8fa] text-[36px] tracking-[-0.2px] text-[#666]">
      <svg viewBox="12 1884 1056 16" width="1056" height="16" className="block">
        {Array.from({ length: 148 }, (_, i) => {
          const x = 183 + 6 * i;
          const major = x === 357 || x === 711 || x === 1065;
          return (
            <rect key={i} x={x - (major ? 1 : 0.8)} y="1884" width={major ? 2.6 : 2} height={major ? 16 : 8.5} fill={major ? "#666" : "#8a8a8a"} opacity={Math.min(1, 0.15 + i / 12)} />
          );
        })}
      </svg>
      <div className="mt-[-1px] flex leading-[40px]">
        <span className="ml-[5px]">20241119</span>
        <span className="ml-[99px]">20250217</span>
        <span className="ml-[195px]">20250515</span>
        <span className="ml-auto mr-[3px]">20250807</span>
      </div>
    </div>
  );
}

function Promo() {
  return (
    <div className="ml-[18px] mt-[17px] flex h-[90px] w-[1044px] items-center rounded-full bg-[#fceee5] pl-[29px] text-[39px] leading-[50px] text-[#e2590a]">
      <Icon box="47 2009 48 44">
        <path d="M49 2023.500V2038" stroke="#e95504" strokeWidth="3.500" />
        <path d="M57 2024L89 2013V2011H93V2050H89V2048L74 2044C72 2048 64 2046 64 2040L57 2038Z" fill="#e95504" />
      </Icon>
      <span className="ml-[52px] mt-[1px]">ETF牛人操作实时更新中！围观发掘最新机会</span>
      <Icon box="0 0 18 28" className="ml-[2px]"><path d="M1 5L15 14L1 23" stroke="#ee9058" strokeWidth="3.500" /></Icon>
      <span className="ml-auto h-[36px] w-[1.500px] bg-[#e2590a]" />
      <Icon box="0 0 36 36" className="ml-[16px] mr-[36px]"><path d="M2 3L33 33M33 3L2 33" stroke="#e2590a" strokeWidth="3" /></Icon>
    </div>
  );
}

function InfoTabs() {
  return (
    <nav className="mt-[17px] flex h-[106px] border-y-2 border-[#d9d9d9] px-[27px] text-[44px] leading-[60px] text-[#666]">
      {["股吧", "盘口", "资讯", "公告", "研报", "财务", "资料"].map((t, i) => (
        <div key={t} className="flex w-[146.400px] flex-col items-center pt-[24px]">
          <span className={i ? "" : "font-medium text-[#e2590a]"}>{t}</span>
          {!i && <span className="mt-[4px] h-[6px] w-[60px] rounded-full bg-[#e2590a]" />}
        </div>
      ))}
    </nav>
  );
}

const NAV = [
  ["交易", <><path d="M360 2241.500A28 28 0 0 1 400 2276M392.500 2286A28 28 0 0 1 352.500 2250.500M343 2253.500L352.500 2250.500M400 2276L407.500 2273M366.500 2251.500L375.500 2261L384.500 2251.500M375.500 2261V2279M365 2261.500H386M365 2270.500H386" stroke="#666" strokeWidth="2.800" /></>, "339 2230 74 68"],
  ["发帖", <><path d="M588 2238.500H560Q551.500 2238.500 551.500 2247V2281Q551.500 2289.500 560 2289.500H594Q602.500 2289.500 602.500 2281V2253" stroke="#666" strokeWidth="2.800" /><path d="M568 2273L571 2264L591 2244L597 2249L576 2269ZM593 2242L598 2237.500Q601 2236 603 2239Q604 2241 603 2243L599 2247Z" fill="#666" /></>, "540 2230 74 68"],
  ["功能", <><g stroke="#666" strokeWidth="2.600"><rect x="753.500" y="2239.500" width="22" height="22" rx="3.500" /><rect x="753.500" y="2266.500" width="22" height="22" rx="3.500" /><rect x="780.500" y="2266.500" width="22" height="22" rx="3.500" /><rect x="782.500" y="2241.500" width="18" height="18" rx="3" transform="rotate(45 791.500 2250.500)" /></g><circle cx="826.500" cy="2237" r="9" fill="#f02323" /></>, "718 2227 120 72"],
  ["设自选", <><circle cx="979" cy="2264" r="27" stroke="#666" strokeWidth="2.800" /><g fill="#666"><circle cx="967" cy="2264" r="2.700" /><circle cx="979" cy="2264" r="2.700" /><circle cx="991" cy="2264" r="2.700" /></g></>, "942 2230 74 68"],
];

function BottomNav() {
  return (
    <footer className="flex h-[176px] border-t-2 border-[#d5d7db] bg-[#f7f8fa]">
      <div className="flex w-[275px] flex-col items-center whitespace-nowrap pt-[8px] text-[#159a15]">
        <Icon box="0 0 22 8"><path d="M0 8L11 0L22 8Z" fill="#888" /></Icon>
        <span className="mt-[11px] pl-[2px] text-[39px] leading-[44px]">17173.16</span>
        <div className="mt-[5px] flex pl-[12px] text-[35.500px] leading-[44px]">
          <span className="text-[#555]">电力行业</span>
          <span className="ml-[13px] text-[36px]">-0.08%</span>
        </div>
      </div>
      {NAV.map(([label, icon, box]) => (
        <div key={label} className="flex w-[201.250px] flex-col items-center">
          <div className="flex h-[75px] items-center"><Icon box={box}>{icon}</Icon></div>
          <span className="mt-[9px] text-[35.500px] leading-[44px] text-[#555]">{label}</span>
        </div>
      ))}
    </footer>
  );
}

export default function App() {
  return (
    <main className="flex h-[2400px] w-[1080px] flex-col overflow-hidden bg-white font-[Roboto,'Noto_Sans_CJK_SC',sans-serif] [&>*]:shrink-0">
      <StatusBar />
      <Header />
      <section className="flex h-[120px] items-center bg-[#fceee5] pl-[36px] text-[42px] leading-[60px] text-[#e2590a]">
        <span className="mt-[5px]">一键开通科创成长层权限！把握打新、交易机会</span>
        <Icon box="0 0 34 34" className="ml-auto mr-[44px]"><path d="M2 2L32 32M32 2L2 32" stroke="#e2590a" strokeWidth="3.200" /></Icon>
      </section>
      <Quote />
      <Notice />
      <PeriodTabs />
      <MaBar />
      <KChart />
      <SubBar />
      <RetailChart />
      <DateAxis />
      <Promo />
      <InfoTabs />
      <div className="flex h-[25px] gap-[22px] overflow-hidden pl-[38px] pt-[11px]">
        <div className="h-[60px] w-[495px] rounded-t-[24px] bg-linear-to-r from-[#fff6f4] to-[#feeeec]" />
        <div className="h-[60px] w-[495px] rounded-t-[24px] bg-linear-to-r from-[#fff6f4] to-[#feeeec]" />
      </div>
      <BottomNav />
    </main>
  );
}
